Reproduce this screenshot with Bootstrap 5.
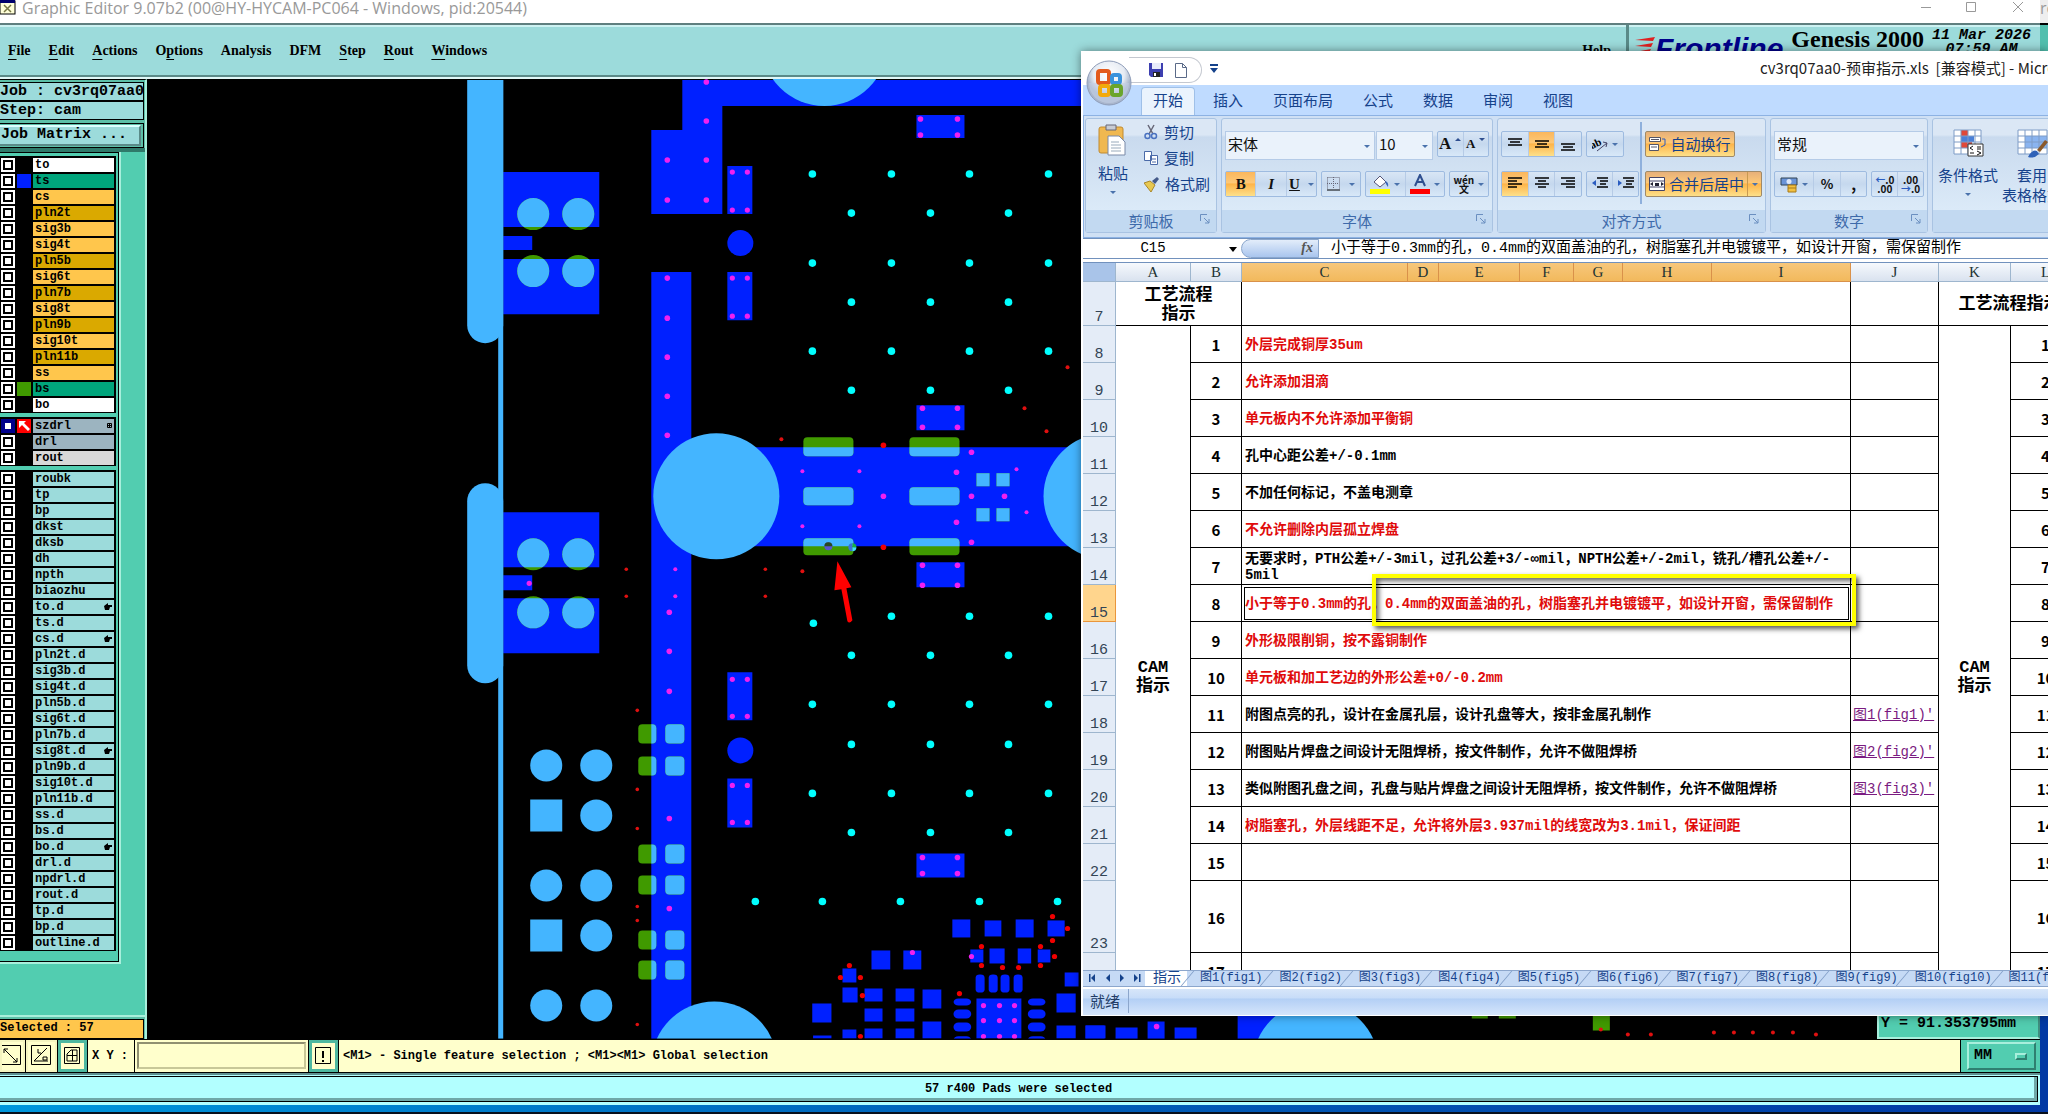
<!DOCTYPE html>
<html lang="zh-CN">
<head>
<meta charset="utf-8">
<meta name="viewport" content="width=device-width, initial-scale=1">
<title>Graphic Editor</title>
<link href="https://cdn.jsdelivr.net/npm/bootstrap@5.3.0/dist/css/bootstrap.min.css" rel="stylesheet">
<style>
:root{--teal:#52cdb0;--aqua:#9cdbdb;--hi:#a8efdc;--lo:#3f8f80;--cream:#ffffcc;--mono:"Liberation Mono","Noto Sans CJK SC",monospace;--cjk:"Noto Sans CJK SC",sans-serif;--serif:"Liberation Serif",serif}
body{background:#0239a4;height:100vh;overflow:hidden;font-family:var(--mono);color:#000;line-height:1.2}
button,input,select{font:inherit;color:inherit;border:0;border-radius:0;padding:0;background:none}
svg{display:block;flex:none}
.min0{min-width:0;min-height:0}
/* editor window */
.gtitle{height:23px;background:#fff;font:16px "Open Sans",sans-serif;color:#999;line-height:16px}
.gtitle .caption{padding-left:6px}
.gmenu{height:56px;background:var(--aqua);border-top:2px solid #5f7f7f;border-bottom:2px solid #e0f8f8;box-shadow:inset 0 2px #cdf2f2,inset 0 -2px #5a8a88;font:bold 14px var(--serif)}
.gmenu a{color:#000;text-decoration:none}
.gmenu u{text-underline-offset:4px}
.gmenu nav{gap:18px;padding-left:8px}
.helpcell{border-right:3px solid #5a8a88;padding:18px 15px 0 0}
.brandcell{width:411px;padding-left:6px}
.frontline{font:italic bold 30px/30px "Liberation Sans",sans-serif;color:#00008c;padding-top:9px}
.genesis{font:bold 24px/28px var(--serif)}
.stamp{font:italic bold 15px/14px var(--mono)}
.side{width:147px;background:var(--teal);border-right:2px solid var(--hi);border-top:1px solid #000;font:bold 12px/14px var(--mono)}
.jobs{font-size:15px;background:#5cc0a8;border-bottom:4px solid #2f7a6a;padding:2px 1px 0 0;white-space:nowrap}
.jobs .line{height:19px;line-height:17px;background:var(--aqua);border:1px solid #000;border-left:0}
.jobs .frame{border:1px solid #000;border-left:0;padding:1px 2px 1px 0;margin-top:3px}
.jobs button{width:100%;height:21px;background:var(--aqua);text-align:left;padding-left:1px;border:2px solid #dff;border-left:0;border-right-color:#5a8a88;border-bottom-color:#5a8a88;font-weight:bold;line-height:16px}
.layers{width:121px;border:solid var(--hi);border-width:0 2px 2px 0}
.layers>div{border:solid #000;border-width:1px 1px 1px 0;padding:3px 2px 6px 0}
.layerset{background:#000;padding-bottom:1px;margin-bottom:4px}
.layerset label{display:flex;height:16px;padding:2px 2px 0 1px;gap:2px}
.layerset input{appearance:none;width:14px;height:14px;flex:none;background:#fff;border:2px solid #fff;box-shadow:inset 0 0 0 2px #000}
.layerset input:checked{border-color:#00008c;box-shadow:inset 0 0 0 2px #00008c}
.swatch{width:14px;height:14px;flex:none}
.lname{flex:1;height:14px;padding:0 2px;display:flex;justify-content:space-between;align-items:center;line-height:14px}
.picked{height:24px;background:#5cc0a8;border-top:2px solid var(--hi);padding:2px 1px 2px 0}
.picked div{background:#ffc64c;border:1px solid #000;border-left:0;height:20px;line-height:17px;font-size:12px}
.board{background:#000}
.coords{width:163px;background:#000}
.coords div{background:var(--teal);border:2px solid var(--hi);border-right-color:var(--lo);font:bold 15px/26px var(--mono);padding-left:2px;height:30px}
.entry{height:34px;background:#000;padding:1px 0;gap:1px;font:bold 12px/32px var(--mono)}
.entry .cell{background:var(--cream)}
.entry .tool{width:31px;padding:3px;border:2px solid #f5f5c0}
.entry .first{width:25px;padding:3px 0}
.entry .lit{width:29px;background:var(--cream);border:3px solid #4fb8a0;padding:3px}
.entry .xylabel{width:46px}
.entry input{width:169px;border:2px solid #909070;border-right-color:#c8c898;border-bottom-color:#c8c898;background:var(--cream);margin:2px;height:27px}
.units{width:79px;background:var(--teal);padding:2px 4px 2px 6px}
.units button{width:100%;height:28px;border:2px solid var(--hi);border-right-color:#2f8070;border-bottom-color:#2f8070;font-weight:bold;font-size:15px;padding:0 7px 0 5px;display:flex;justify-content:space-between;align-items:center}
.notch{width:12px;height:7px;border:2px solid var(--hi);border-right-color:#2f8070;border-bottom-color:#2f8070}
.report{height:32px;background:#b2ffff;border:solid #5f8f8f;border-width:2px 0 0;font:bold 12px/24px var(--mono);padding:1px 2px 3px 0}
.report div{border:1px solid #000;border-left:0;height:26px;box-shadow:inset -3px -3px #6fa8a8}
.behind{width:8px;background:linear-gradient(#eee 23px,#000 23px 25px,#52bfae 25px 51px,#0239a4 51px);font:16px "Open Sans",sans-serif;color:#999;line-height:16px;overflow:hidden}
.taskedge{height:9px;background:linear-gradient(90deg,#0097dc,#0060b8 50%,#0239a4) 0 0/100% 7px no-repeat,#08101c}
/* spreadsheet window */
.xls{position:absolute;left:1081px;right:0;top:51px;height:965px;background:#fff;border:solid #fff;border-width:0 0 1px 2px;box-shadow:0 0 9px rgba(0,0,0,.45);overflow:hidden;font:15px/18px var(--cjk)}
.xtitle{height:34px;position:relative}
.orb{position:absolute;left:3px;top:8px;z-index:2}
.qat{margin-left:46px;margin-top:6px;width:73px;height:26px;border:1px solid #c4c8d0;border-left:0;border-radius:0 13px 13px 0;padding-left:20px;gap:12px}
.doc{margin-left:541px;white-space:pre;color:#222}
.tabs{height:30px;background:#bfdbff;padding:2px 0 0 58px}
.tabs button{padding:0 15px;color:#15428b;line-height:24px;height:28px;padding-bottom:3px}
.tabs .on{margin-right:3px;background:#eaf3fd;border:1px solid #9fc0e8;border-bottom:0;border-radius:4px 4px 0 0;width:54px;white-space:nowrap;padding:0 11px 3px}
.ribbon{height:123px;background:#cfe0f4;border:1px solid #8db2e3;border-right:0;padding:2px 0 4px 1px;gap:4px}
.rgroup{border:1px solid #a9c3e2;border-radius:3px;background:linear-gradient(#dbe7f5 0 14%,#c9daee 16%,#dbeaf8 80%);display:flex;flex-direction:column;flex:none;color:#15428b}
.g-clip{width:132px}.g-font{width:272px}.g-align{width:269px}.g-num{width:158px}.g-style{width:300px}
.w150{width:150px}.w117{width:117px}.w94{width:94px}.w90{width:90px}.w81{width:81px}.w64{width:64px}.w57{width:57px}.w53{width:53px}.w41{width:41px}.w38{width:38px}
.rbody{flex:1;padding:0 3px}
.rbody.inset{padding-top:12px}
.rlabel{height:22px;background:#c2d9f1;color:#3e6aaa;text-align:center;line-height:22px;position:relative}
.rlabel svg{position:absolute;right:6px;top:4px}
.big{display:flex;flex-direction:column;align-items:center;line-height:20px;white-space:nowrap}
.big svg+span{margin-top:6px}
.paste{margin-left:9px}
.sm{display:flex;align-items:center;gap:6px;height:26px}
.rrow{display:flex;gap:4px;height:26px}
.rrow+.rrow{margin-top:14px}
.tight{margin-right:-3px}
.alignleft{width:142px}
.alignright{border-left:2px solid #8fb0dc;padding-left:3px;height:82px;margin-top:-9px;padding-top:9px}
.bset{display:flex;border:1px solid #9ebbe0;border-radius:2px;height:26px;background:linear-gradient(#d9e6f5,#c5d8ee 50%,#d8e8f8)}
.bset button{display:flex;align-items:center;justify-content:center;gap:4px;flex:1;border-right:1px solid #b6cbe6;color:#111;white-space:nowrap}
.bset button:last-child{border-right:0}
.bset .hot{background:linear-gradient(#fbb75c,#fdc877 45%,#feb449 50%,#fde08a)}
.bset.warm{background:linear-gradient(#e7b079,#fdc877 45%,#feb449 50%,#fde08a);border-color:#a08a68}
.bset.warm button{color:#15428b;border-color:#c99a50}
.bset .mergebtn{flex:0 0 102px}
.bset .money{flex:1.5}
.face{font-family:var(--serif)}
.face .big-a{font-size:17px}.face .small-a{font-size:13px}
.tiny{font:bold 10px/9px var(--cjk)}
.tiny i{font-style:normal;color:#2a5cc0}
.combo{appearance:none;height:29px;background:#eaf2fb;border:1px solid #b5cbe7;padding:0 0 3px 2px;color:#111}
.pick{position:relative;display:flex;height:29px}
.pick::after{content:"";position:absolute;right:5px;top:14px}
.pick::after,.car{width:0;height:0;border:3px solid transparent;border-top-color:#4a72ac;border-bottom:0}
.fbar{height:21px;border:solid #7191bd;border-width:1px 0;line-height:19px}
.fbar .ref{width:158px;text-align:center;font-family:var(--mono);font-size:14px;position:relative;padding-right:18px}
.fbar .ref svg{position:absolute;right:4px;top:8px}
.fbar .fx{width:78px;background:linear-gradient(#e3edfa,#a9c5ee);border-radius:10px 0 0 10px;border:1px solid #8aa6cc;font:italic bold 14px/16px var(--serif);text-align:right;padding-right:5px;color:#555}
.fbar .ftext{flex:1;border:0;padding-left:12px;font-family:var(--mono);min-width:0}
.grid{flex:1;min-height:0;overflow:hidden;position:relative;margin-top:3px;border-top:1px solid #7191bd}
.grid table{table-layout:fixed;width:998px;border-collapse:separate;border-spacing:0}
.grid th,.grid td{padding:2px 0 0;border:solid #000;border-width:0 1px 1px 0}
.grid tr{height:37px}
.grid thead tr{height:19px}
.grid tr.mid{height:44px}
.grid tr.tall{height:72px}
.grid thead th{height:19px;padding:0;background:linear-gradient(#f6f9fd,#d9e2ef);border-color:#9eb6ce;font:15px/17px var(--serif);text-align:center;color:#233}
.grid thead th.corner{background:#a9c4e9}
.grid thead th.sel{background:linear-gradient(#f7c77c,#f2b95c);border-color:#d9914a}
.grid tbody th{background:#e4ecf7;border-color:#9eb6ce;font:15px/14px "Liberation Mono",monospace;vertical-align:bottom;text-align:center;color:#345}
.grid tbody th.sel{background:#ffd58d;border-color:#e9963c}
.c-r{width:33px}.c-a{width:75px}.c-b{width:51px}.c-c{width:166px}.c-d{width:31px}.c-e{width:81px}.c-f{width:54px}.c-g{width:49px}.c-h{width:89px}.c-i{width:139px}.c-j{width:88px}.c-k{width:72px}.c-l{width:70px}
.grid .num{font:bold 15px/18px var(--cjk);text-align:center}
.grid .txt{font:bold 14px/16px var(--mono);padding-left:3px;white-space:nowrap}
.grid .txt.r{color:#e00b0b}
.grid .txt.cur{outline:1px solid #000;outline-offset:-3px}
.grid .head{font:bold 17px/19px var(--mono);text-align:center;white-space:nowrap}
.grid .lnk{font:14px/17px var(--mono);padding-left:2px;white-space:nowrap}
.lnk a{color:#7a1a80}
.callout-box{position:absolute;left:289px;top:311px;width:484px;height:52px;border:4px solid #ffff00;box-shadow:3px 3px 5px rgba(0,0,0,.65),inset 3px 3px 5px rgba(0,0,0,.6)}
.sheets{height:17px;background:#c6daf5;border:solid #8ca6cc;border-width:1px 0;font:12px/15px var(--mono)}
.sheets button{color:#15428b;padding:0 4px 0 13px;position:relative;white-space:nowrap}
.sheets button::before{content:"";position:absolute;left:0;top:0;bottom:0;width:1px;background:#7f9cc6;transform:skewX(-40deg)}
.sheets .cur{background:#fff;font-size:14px;padding:0 6px 0 8px}
.sheets .cur::before{display:none}
.sstatus{height:26px;margin-top:2px;background:linear-gradient(#d7e6f9,#c7dcf8 35%,#b3cff5 38%,#d5e5fb);color:#223c66;line-height:24px}
.sstatus div{width:46px;padding-left:7px;border-right:1px solid #8ca6cc}
</style>
</head>
<body class="d-flex flex-column">
<div class="d-flex flex-fill min0">
<main class="d-flex flex-column flex-fill min0">
  <header class="gtitle d-flex align-items-start">
    <svg width="16" height="15"><rect x="0" y="1" width="15" height="13" fill="#ffffd8" stroke="#000"/><rect x="0" y="0" width="15" height="3" fill="#00006c"/><path d="M4 5l7 7M11 5l-7 7" stroke="#774" stroke-width="1.5"/></svg>
    <span class="caption">Graphic Editor 9.07b2 (00@HY-HYCAM-PC064 - Windows, pid:20544)</span>
    <svg class="ms-auto" width="125" height="16" fill="none" stroke="#999"><path d="M6 7.500h10M51.500 2.500h9v9h-9zM98 2l10 10M108 2l-10 10"/></svg>
  </header>
  <div class="gmenu d-flex">
    <nav class="d-flex align-items-center flex-fill">
      <a href="#"><u>F</u>ile</a><a href="#"><u>E</u>dit</a><a href="#"><u>A</u>ctions</a><a href="#">O<u>p</u>tions</a><a href="#">Analysis</a><a href="#">DFM</a><a href="#"><u>S</u>tep</a><a href="#"><u>R</u>out</a><a href="#"><u>W</u>indows</a>
    </nav>
    <div class="helpcell"><a href="#">Help</a></div>
    <div class="brandcell d-flex align-items-start">
      <svg width="20" height="30" class="mt-2"><path d="M0 7l20-3-2 4zM0 13l18-3-2 4zM0 19l16-3-2 4z" fill="#e02020"/></svg>
      <span class="frontline">Frontline</span>
      <span class="genesis ps-2">Genesis 2000</span>
      <span class="stamp text-center ms-2 pt-1 text-nowrap">11 Mar 2026<br>07:59 AM</span>
    </div>
  </div>
  <div class="d-flex flex-fill min0">
    <aside class="side d-flex flex-column flex-shrink-0">
      <div class="jobs">
        <div class="line">Job : cv3rq07aa0</div>
        <div class="line">Step: cam</div>
        <div class="frame"><button type="button">Job Matrix ...</button></div>
      </div>
      <div class="layers"><div id="layers"></div></div>
      <div class="picked mt-auto"><div>Selected : 57</div></div>
    </aside>
    <div class="board flex-fill min0">
      <svg width="100%" height="100%" viewBox="147 79 1729 960" preserveAspectRatio="xMinYMin slice" id="pcb">
        <defs>
          <g id="top">
            <path d="M682 80H1900V106H722V214H651V130H682zM651 272h40V447H1200V546H691V1040H651z"/>
            <path d="M503 172h96v55h-96zM503 236h29v14h-29zM503 259h96v55h-96zM503 512h96v55h-96zM503 575h29v15h-29zM503 598h96v55h-96zM727 166h25v48h-25zM727 272h25v48h-25zM727 672h25v48h-25zM727 778h25v49h-25zM916 115h48v23h-48zM916 405h48v25h-48zM916 562h48v25h-48zM916 853h48v24h-48z"/>
            <circle cx="740" cy="243" r="13"/><circle cx="740" cy="750" r="13"/>
          </g>
          <clipPath id="over"><path d="M651 272h40V447H1200V546H691V1040H651zM503 172h96v55h-96zM503 259h96v55h-96zM503 512h96v55h-96zM503 598h96v55h-96z"/></clipPath>
          <g id="bottom"></g>
        </defs>
        <use href="#top" fill="#0020ff"/>
        <use href="#bottom" fill="#409a00"/>
        <use href="#bottom" fill="#44b5ff" clip-path="url(#over)"/>
        <g fill="#44b5ff">
          <path d="M498 80h5v960h-5z"/><path d="M467 80h36v245a18 18 0 0 1-36 0z"/><rect x="467" y="483" width="36" height="200" rx="18"/>
          <circle cx="824" cy="43" r="63"/><circle cx="716" cy="496" r="63"/><circle cx="1106" cy="496" r="63"/><circle cx="714" cy="1064" r="63"/>
          <path d="M530 799h32v32h-32zM530 919h32v32h-32z"/>
        </g>
        <g id="rounds" fill="#44b5ff"></g>
        <g fill="#0020ff"><path d="M1085 1025h19v14h-19zM1115 1027h22v12h-22zM1147 1021h17v18h-17zM1174 1027h22v12h-22zM1237 1000h40v39h-40z"/></g>
        <circle cx="1315" cy="1064" r="63" fill="#44b5ff"/>
        <path d="M1471 1000h16v18h-16zM1498 1000h17v18h-17zM1592 1000h17v30h-17z" fill="#409a00"/>
        <g id="chips" transform="translate(460 560) scale(.4082 .3333)" fill="#0020ff"></g>
        <g id="dots"></g>
        <circle cx="828" cy="546" r="4" fill="#5a55d0"/><path d="M824 546a4 4 0 0 1 8 0z" fill="#284a20"/>
        <path d="M852 543a4 4 0 0 0 0 8z" fill="#3a70d8"/><path d="M852 543v4h4a4 4 0 0 0-4-4z" fill="#18b040"/><path d="M852 547v4a4 4 0 0 0 4-4z" fill="#40e0ff"/>
        <path d="M837 561l14 26-5 1 6 32q-3 4-5 1l-6-32-7 1z" fill="#f00"/>
        <rect x="147" y="1038" width="1800" height="2"/>
      </svg>
    </div>
    <div class="coords d-flex flex-column justify-content-end"><div>Y = 91.353795mm</div></div>
  </div>
  <div class="entry d-flex">
    <div class="cell tool first"><svg width="20" height="21" fill="none" stroke="#000"><path d="M0 .5h18.500v19H0M2 4l13 13M2 8V4h4M11 17h4v-4"/></svg></div>
    <div class="cell tool"><svg width="21" height="21" fill="none" stroke="#000"><path d="M.5 .5h19v19H.5zM3 16L16 3M3 16h14M7 4v4h3M12 12h4v3h-4z"/></svg></div>
    <button class="lit" type="button" aria-label="grid"><svg width="17" height="18" fill="none" stroke="#000"><path d="M.5 .5h15v16H.5zM3 7l4-4h6v11H3zM3 8.500h10M8.500 3v11"/></svg></button>
    <label class="cell xylabel ps-1" for="xy">X Y :</label>
    <div class="cell d-flex"><input id="xy" type="text"></div>
    <button class="lit" type="button" aria-label="alert"><svg width="17" height="18"><path d="M.5 .5h15v16H.5z" fill="none" stroke="#000"/><path d="M7 4h2v7H7zM7 13h2v2H7z"/></svg></button>
    <div class="cell flex-fill ps-1">&lt;M1&gt; - Single feature selection ; &lt;M1&gt;&lt;M1&gt; Global selection</div>
    <div class="units"><button type="button">MM<span class="notch"></span></button></div>
  </div>
  <div class="report text-center"><div>57 r400 Pads were selected</div></div>
</main>
<div class="behind">ro</div>
</div>
<div class="taskedge"></div>

<section class="xls d-flex flex-column">
  <div class="xtitle d-flex align-items-center flex-shrink-0">
    <svg class="orb" width="48" height="48" viewBox="0 0 48 48"><defs><radialGradient id="og" cx=".5" cy=".3"><stop offset="0" stop-color="#fff"/><stop offset=".7" stop-color="#e6ebf3"/><stop offset="1" stop-color="#a9b6cc"/></radialGradient></defs><circle cx="23" cy="24" r="22" fill="url(#og)" stroke="#8e9cb8"/><path d="M3 24a20 20 0 0 0 40 0z" fill="#c3cfe4" opacity=".6"/><g fill="none" stroke-width="4"><rect x="12" y="12" width="11" height="12" rx="2" stroke="#e35a1c"/><rect x="26" y="16" width="8" height="8" rx="2" stroke="#3a92dc"/><rect x="14" y="27" width="9" height="9" rx="2" stroke="#f2a90c"/><rect x="26" y="27" width="9" height="9" rx="2" stroke="#6aa52c"/></g></svg>
    <div class="qat d-flex align-items-center align-self-start flex-shrink-0"><svg width="14" height="14"><path d="M0 0h14v14H2L0 12z" fill="#3d3fb0"/><path d="M3 0h9v6H3z" fill="#e8ecfa"/><path d="M4 9h7v5H4z" fill="#222"/><path d="M5 10h2v3H5z" fill="#fff"/></svg><svg width="12" height="15"><path d="M.5 .5h7l4 4v10H.5z" fill="#fff" stroke="#5a6a88"/><path d="M7.500 .5v4h4" fill="none" stroke="#5a6a88"/></svg></div>
    <svg width="9" height="9" class="ms-2"><path d="M0 0h8v2H0zM0 4h8L4 9z" fill="#15428b"/></svg>
    <span class="doc">cv3rq07aa0-预审指示.xls  [兼容模式] - Microsoft Excel</span>
  </div>
  <div class="tabs d-flex flex-shrink-0"><button class="on">开始</button><button>插入</button><button>页面布局</button><button>公式</button><button>数据</button><button>审阅</button><button>视图</button></div>
  <div class="ribbon d-flex flex-shrink-0">
    <div class="rgroup g-clip"><div class="rbody d-flex gap-3">
      <div class="big paste pt-1"><svg width="30" height="34" viewBox="0 0 30 34"><rect x="1" y="4" width="24" height="26" rx="2" fill="#f0b850" stroke="#c08a30"/><path d="M8 2h10v5H8z" fill="#c8ccd4" stroke="#667"/><path d="M10 13h11l6 6v13H10z" fill="#fff" stroke="#7a8aa8"/><path d="M13 19h8M13 22h10M13 25h10M13 28h10" stroke="#9ab"/></svg><span>粘贴</span><i class="car mt-2"></i></div>
      <div><div class="sm"><svg width="14" height="16" fill="none" stroke="#4a72c0" stroke-width="1.500"><path d="M4 1l5 9M10 1L5 10" stroke="#667"/><circle cx="3.500" cy="12" r="2.500"/><circle cx="10" cy="12" r="2.500"/></svg>剪切</div><div class="sm"><svg width="14" height="14" fill="#fff" stroke="#4a6aa8"><path d="M.5 .5h7v9h-7zM6.500 4.500h7v9h-7z"/><path d="M8 8h4M8 11h4"/></svg>复制</div><div class="sm"><svg width="15" height="15"><path d="M0 6l6-2 5 4-4 7z" fill="#e8c850" stroke="#a8862c"/><path d="M8 4l5-4 2 2-4 5z" fill="#445a8a"/></svg>格式刷</div></div>
    </div><div class="rlabel">剪贴板<svg width="10" height="10" fill="none" stroke="#6b8fc0"><path d="M.5 7V.5H7M4 4l5 5M9 5v4H5"/></svg></div></div>
    <div class="rgroup g-font"><div class="rbody inset">
      <div class="rrow"><div class="pick tight"><select class="combo w150" aria-label="字体"><option>宋体</option></select></div><div class="pick"><select class="combo w57" aria-label="字号"><option>10</option></select></div><div class="bset face w53"><button><b class="big-a">A</b><svg width="6" height="12"><path d="M0 3h6L3 0z" fill="#2f4f8f"/></svg></button><button><b class="small-a">A</b><svg width="6" height="12"><path d="M0 0h6L3 3z" fill="#2f4f8f"/></svg></button></div></div>
      <div class="rrow"><div class="bset face w94"><button class="hot"><b>B</b></button><button><b><i>I</i></b></button><button><u><b>U</b></u><i class="car ms-1"></i></button></div><div class="bset w41"><button><svg width="14" height="14"><path d="M.5 .5h12v12M.5 .5v12M6.500 0v12M0 6.500h12" fill="none" stroke="#667" stroke-dasharray="1 1"/><path d="M0 13h13" stroke="#000"/></svg><i class="car ms-1"></i></button></div><div class="bset w81"><button><svg width="20" height="20"><path d="M4 8l6-6 6 6-6 5z" fill="#fff" stroke="#557"/><path d="M15 7q4 1 3 6l-2-3z" fill="#3a66b8"/><path d="M0 15h20v5H0z" fill="#ff0"/></svg><i class="car"></i></button><button><svg width="20" height="20"><path d="M5 12L10 1l5 11M7 8h6" fill="none" stroke="#2f4f8f" stroke-width="2"/><path d="M0 15h20v5H0z" fill="#f00"/></svg><i class="car"></i></button></div><div class="bset w41"><button><span class="tiny">wén<br>文</span><i class="car"></i></button></div></div>
    </div><div class="rlabel">字体<svg width="10" height="10" fill="none" stroke="#6b8fc0"><path d="M.5 7V.5H7M4 4l5 5M9 5v4H5"/></svg></div></div>
    <div class="rgroup g-align"><div class="rbody inset d-flex">
      <div class="alignleft"><div class="rrow"><div class="bset w81"><button><svg width="14" height="12"><path d="M0 1h14M2 4h10M0 7h14" stroke="#000" stroke-width="1.500"/></svg></button><button class="hot"><svg width="14" height="12"><path d="M0 3h14M2 6h10M0 9h14" stroke="#000" stroke-width="1.500"/></svg></button><button><svg width="14" height="14"><path d="M0 7h14M2 10h10M0 13h14" stroke="#000" stroke-width="1.500"/></svg></button></div><div class="bset w38"><button><svg width="16" height="16"><text x="-2" y="11" font-size="11" font-weight="bold" font-family="Liberation Serif" transform="rotate(-25 4 8)">ab</text><path d="M5 15l10-8M11 6l4 1-1 4" fill="none" stroke="#446"/></svg><i class="car"></i></button></div></div>
      <div class="rrow"><div class="bset w81"><button class="hot"><svg width="14" height="14"><path d="M0 1h14M0 4h9M0 7h14M0 10h9" stroke="#000" stroke-width="1.500"/></svg></button><button><svg width="14" height="14"><path d="M0 1h14M3 4h8M0 7h14M3 10h8" stroke="#000" stroke-width="1.500"/></svg></button><button><svg width="14" height="14"><path d="M0 1h14M5 4h9M0 7h14M5 10h9" stroke="#000" stroke-width="1.500"/></svg></button></div><div class="bset w53"><button><svg width="16" height="14"><path d="M5 1h11M8 4h8M8 7h6M5 10h11" stroke="#000" stroke-width="1.500"/><path d="M0 6l4-3v6z" fill="#2a5cc0"/></svg></button><button><svg width="16" height="14"><path d="M5 1h11M8 4h8M8 7h6M5 10h11" stroke="#000" stroke-width="1.500"/><path d="M4 6L0 3v6z" fill="#2a5cc0"/></svg></button></div></div></div>
      <div class="alignright"><div class="rrow"><div class="bset warm w90"><button><svg width="17" height="16"><path d="M.5 1.500h11v4h-11zM.5 8.500h9v6h-9z" fill="#fff" stroke="#556"/><path d="M2 11h6M2 3.500h8" stroke="#556"/><path d="M13 3h3v6l-4 2" fill="none" stroke="#2a5cc0"/></svg>自动换行</button></div></div><div class="rrow"><div class="bset warm w117"><button class="mergebtn"><svg width="16" height="14"><path d="M.5 .5h15v13h-15zM.5 4h15M.5 10h15" fill="#fff" stroke="#446"/><path d="M1 7l3-2v4zM15 7l-3-2v4zM6 6h4v3H6z" fill="#223"/></svg>合并后居中</button><button aria-label="更多"><i class="car"></i></button></div></div></div>
    </div><div class="rlabel">对齐方式<svg width="10" height="10" fill="none" stroke="#6b8fc0"><path d="M.5 7V.5H7M4 4l5 5M9 5v4H5"/></svg></div></div>
    <div class="rgroup g-num"><div class="rbody inset">
      <div class="rrow"><div class="pick"><select class="combo w150" aria-label="数字格式"><option>常规</option></select></div></div>
      <div class="rrow"><div class="bset w94"><button class="money"><svg width="18" height="17"><path d="M1 2h16v7H1z" fill="#6a94d8" stroke="#345"/><circle cx="9" cy="5.500" r="2.500" fill="#dde8fa"/><path d="M8 9h8v7H8zM8 12h8" fill="#f2c040" stroke="#a87a18"/></svg><i class="car"></i></button><button><small><b>%</b></small></button><button><b>,</b></button></div><div class="bset tiny w53"><button><span><i>←</i>.0<br>.00</span></button><button><span>.00<br><i>→</i>.0</span></button></div></div>
    </div><div class="rlabel">数字<svg width="10" height="10" fill="none" stroke="#6b8fc0"><path d="M.5 7V.5H7M4 4l5 5M9 5v4H5"/></svg></div></div>
    <div class="rgroup g-style"><div class="rbody d-flex pt-2">
      <div class="big w64"><svg width="31" height="32" viewBox="0 0 31 32"><path d="M1 3h27v24H1z" fill="#fff"/><path d="M8 3h7v6H8zM8 15h11v6H8z" fill="#e04838"/><path d="M8 9h13v6H8z" fill="#4a80d8"/><path d="M1 3h27v24H1zM1 9h27M1 15h27M1 21h27M8 3v24M15 3v24M22 3v24" fill="none" stroke="#7f9cc6"/><path d="M15 17h15v12H15z" fill="#fff" stroke="#333"/><path d="M20 19l-3 2 3 2M17 26h4M24 20h4M24 22h4M24 24l4 2-4 2" fill="none" stroke="#111"/></svg><span>条件格式</span><i class="car mt-2"></i></div>
      <div class="big w64"><svg width="31" height="32" viewBox="0 0 31 32"><path d="M1 3h29v24H1z" fill="#fff"/><path d="M8 9h22v12H8z" fill="#8ab4f0"/><path d="M1 3h29v24H1zM1 9h29M1 15h29M1 21h29M8 3v24M15 3v24M22 3v24" fill="none" stroke="#7f9cc6"/><path d="M11 30q4-8 9-6l2 3q-5 5-11 3z" fill="#2f62b8"/><path d="M20 23l8-10 3 2-8 10z" fill="#8a5a2c"/></svg><span>套用</span><span>表格格式</span></div>
    </div><div class="rlabel"></div></div>
  </div>
  <div class="fbar d-flex flex-shrink-0"><div class="ref">C15<svg width="8" height="5"><path d="M0 0h8L4 5z"/></svg></div><div class="fx"><i>f</i>x</div><input class="ftext" aria-label="编辑栏" value="小于等于0.3mm的孔，0.4mm的双面盖油的孔，树脂塞孔并电镀镀平，如设计开窗，需保留制作"></div>
  <div class="grid"><table><colgroup><col class="c-r"><col class="c-a"><col class="c-b"><col class="c-c"><col class="c-d"><col class="c-e"><col class="c-f"><col class="c-g"><col class="c-h"><col class="c-i"><col class="c-j"><col class="c-k"><col class="c-l"></colgroup>
    <thead><tr><th class="corner"></th><th>A</th><th>B</th><th class="sel">C</th><th class="sel">D</th><th class="sel">E</th><th class="sel">F</th><th class="sel">G</th><th class="sel">H</th><th class="sel">I</th><th>J</th><th>K</th><th>L</th></tr></thead>
    <tbody id="rows"></tbody></table>
    <div class="callout-box"></div>
  </div>
  <div class="sheets d-flex flex-shrink-0" id="sheets"><svg width="62" height="15" fill="#15428b"><path d="M6 3h1.500v8H6zM12 3v8L8 7zM27 3v8l-4-4zM37 3v8l4-4zM51 3v8l4-4zM56 3h1.500v8H56z"/></svg><button class="cur">指示</button></div>
  <div class="sstatus flex-shrink-0"><div>就绪</div></div>
</section>
<script src="https://cdn.jsdelivr.net/npm/bootstrap@5.3.0/dist/js/bootstrap.bundle.min.js"></script>
<script>
// layer list
const sets=[
 [['to','#fff'],['ts','#00a57c','#0020ff'],['cs','#ffc64c'],['pln2t','#daa900'],['sig3b','#ffc64c'],['sig4t','#ffc64c'],['pln5b','#daa900'],['sig6t','#ffc64c'],['pln7b','#daa900'],['sig8t','#ffc64c'],['pln9b','#daa900'],['sig10t','#ffc64c'],['pln11b','#daa900'],['ss','#ffc64c'],['bs','#00a57c','#409a00'],['bo','#fff']],
 [['szdrl','#9cb4c0','#f00'],['drl','#9cb4c0'],['rout','#d8d8d8']],
 'roubk tp bp dkst dksb dh npth biaozhu to.d ts.d cs.d pln2t.d sig3b.d sig4t.d pln5b.d sig6t.d pln7b.d sig8t.d pln9b.d sig10t.d pln11b.d ss.d bs.d bo.d drl.d npdrl.d rout.d tp.d bp.d outline.d'.split(' ').map(n=>[n,'#9cdbdb'])];
const hand='<svg width="8" height="8"><path d="M0 3l4-3v2h4v2H6L5 7H1z"/></svg>';
const plus='<svg width="5" height="5"><path d="M.5 .5h4v4h-4zM2.500 0v5M0 2.500h5" fill="none" stroke="#000"/></svg>';
const arrow='<svg width="14" height="14"><path d="M2 2h7L7 4l6 6-2 2-6-6-3 3z" fill="#fff"/></svg>';
document.getElementById('layers').innerHTML=sets.map(s=>'<div class="layerset">'+s.map(([n,c,w])=>`<label><input type="checkbox"${n=='szdrl'?' checked':''}><span class="swatch" style="background:${w||'#000'}">${n=='szdrl'?arrow:''}</span><span class="lname" style="background:${c}">${n}${n=='szdrl'?plus:['to.d','cs.d','sig8t.d','bo.d'].includes(n)?hand:''}</span></label>`).join('')+'</div>').join('');
// board artwork
const c=(x,y,r,f)=>`<circle cx="${x}" cy="${y}" r="${r}"${f?` fill="${f}"`:''}/>`;
const r=(x,y,w,h,k)=>`<rect x="${x}" y="${y}" width="${w}" height="${h}" rx="${k||0}"/>`;
let b='';
for(const y of [214,554])for(const x of [533,578])b+=c(x,y,16);
for(const y of [271,612])for(const x of [533,578])b+=c(x,y,16);
for(const x of [803,909]){b+=r(x,437,50,19,4)+r(x,487,50,18,4)+r(x,538,50,17,4)}
for(const x of [976,996])for(const y of [473,508])b+=r(x,y,13,13);
for(const y of [724,756,844,875,930,960])b+=r(638,y,18,19,4)+r(665,y,19,19,4);
document.getElementById('bottom').innerHTML=b;
document.getElementById('rounds').innerHTML=[[546,765],[596,765],[596,815],[546,885],[596,885],[596,935],[546,1005],[596,1005]].map(p=>c(p[0],p[1],16)).join('');
let chips=[[1205,1077,1249,1131],[1284,1080,1325,1128],[1360,1077,1404,1131],[1438,1080,1480,1128],[1007,1170,1053,1227],[1085,1170,1129,1227],[1249,1167,1281,1206],[1296,1164,1333,1209],[1365,1164,1398,1209],[1414,1167,1445,1206],[936,1224,970,1266],[936,1281,973,1326],[990,1284,1034,1323],[1066,1284,1112,1323],[1132,1287,1178,1344],[862,1329,909,1386],[990,1344,1034,1383],[1066,1344,1112,1383],[1132,1383,1178,1434],[936,1407,970,1434],[990,1404,1034,1434],[1066,1404,1112,1434],[864,1425,909,1434],[1264,1314,1374,1434],[1480,1236,1514,1278],[1460,1299,1507,1356],[1460,1395,1507,1434],[1531,1395,1580,1434]].map(a=>r(a[0],a[1],a[2]-a[0],a[3]-a[1])).join('');
for(const x of [1262,1294,1323,1355])chips+=r(x,1242,22,54,10);
for(const x of [1208,1390])for(const y of [1314,1347,1386,1427])chips+=r(x,y,43,y==1314?21:27,12);
document.getElementById('chips').innerHTML=chips;
const M='#f020f0',R='#e01010',C='#00ffff';let d='';
const put=(xs,ys,k,f)=>{for(const x of xs)for(const y of ys)d+=c(x,y,k,f)};
put([706],[82,121,160,200],2.8,M);put([667],[160,200,278,318,357,396,435],2.8,M);put([732,747],[172,210,278,316,679,716,785,822],2.6,M);
put([675],[569,596],2,M);put([669],[612,651,691,818,908],2.8,M);put([920,957],[119,135],2.8,M);put([922,957],[408,427,565,585,857,873],2.8,M);
put([802,859],[471,526],2,M);put([971],[452,496,542],2.8,M);put([956],[472,522],2.8,M);put([883,1004],[496],2.8,M);d+=c(1016,469,2,M)+c(1026,512,2,M)+c(529,583,2.6,M)+c(1156,1026,2.8,M);
put([883],[445,547],2.8,'#f00000');put([626,765],[569,596],1.8,R);put([637],[710,789,828,906,920,1024],1.8,R);
for(const p of [[781,439],[1067,367],[1024,408],[1046,431],[802,571],[1600,1029],[1627,1034],[1650,1034],[1713,1032],[1733,1032],[1752,1032],[1772,1032],[1792,1032],[1815,1034]])d+=c(p[0],p[1],2,R);
put([812,891,969,1048],[174,263,351,704,793],3.8,C);put([851,930,1008],[213,302,390,655,744,832],3.8,C);put([891,969,1048],[616],3.8,C);d+=c(813,623,3.8,C);put([755,822,900,979,1057],[901],3.8,C);
const q=(a,f)=>a.forEach(p=>d+=c((460+p[0]*.4082).toFixed(0),(560+p[1]/3).toFixed(0),2.6,f));
q([[1450,1069],[1488,1105],[1450,1141],[1277,1158],[1421,1158],[1454,1187],[1277,1216],[1329,1222],[1368,1222],[1421,1216],[954,1216],[931,1252],[979,1252],[984,1306],[1223,1300],[979,1428]],'#f00000');
q([[1108,1176],[1253,1188],[1282,1335],[1320,1335],[1358,1335],[1282,1381],[1320,1381],[1358,1381],[1282,1428],[1320,1428],[1358,1428]],M);
document.getElementById('dots').innerHTML=d;
// worksheet
const rows=[['外层完成铜厚35um',1],['允许添加泪滴',1],['单元板内不允许添加平衡铜',1],['孔中心距公差+/-0.1mm'],['不加任何标记，不盖电测章'],['不允许删除内层孤立焊盘',1],['无要求时，PTH公差+/-3mil，过孔公差+3/-∞mil，NPTH公差+/-2mil，铣孔/槽孔公差+/-<br>5mil'],['小于等于0.3mm的孔，0.4mm的双面盖油的孔，树脂塞孔并电镀镀平，如设计开窗，需保留制作',1],['外形极限削铜，按不露铜制作',1],['单元板和加工艺边的外形公差+0/-0.2mm',1],['附图点亮的孔，设计在金属孔层，设计孔盘等大，按非金属孔制作'],['附图贴片焊盘之间设计无阻焊桥，按文件制作，允许不做阻焊桥'],['类似附图孔盘之间，孔盘与贴片焊盘之间设计无阻焊桥，按文件制作，允许不做阻焊桥'],['树脂塞孔，外层线距不足，允许将外层3.937mil的线宽改为3.1mil，保证间距',1],[''],[''],[''],['']];
let h='<tr class="mid"><th>7</th><td colspan="2" class="head">工艺流程<br>指示</td><td colspan="7"></td><td></td><td colspan="2" class="head">工艺流程指示</td></tr>';
rows.forEach((t,i)=>{const n=i+1,m=i?'':`<td rowspan="18" class="head">CAM<br>指示</td>`;
h+=`<tr${n==16?' class="tall"':''}><th${n==8?' class="sel"':''}>${n+7}</th>${m}<td class="num">${n}</td><td colspan="7" class="txt${t[1]?' r':''}${n==8?' cur':''}">${t[0]}</td><td class="lnk">${n>10&&n<14?`<a href="#">图${n-10}(fig${n-10})'</a>`:''}</td>${m}<td class="num">${n}</td></tr>`});
document.getElementById('rows').innerHTML=h;
document.getElementById('sheets').insertAdjacentHTML('beforeend',Array.from({length:11},(_,i)=>`<button>图${i+1}(fig${i+1})</button>`).join(''));
</script>
</body>
</html>
